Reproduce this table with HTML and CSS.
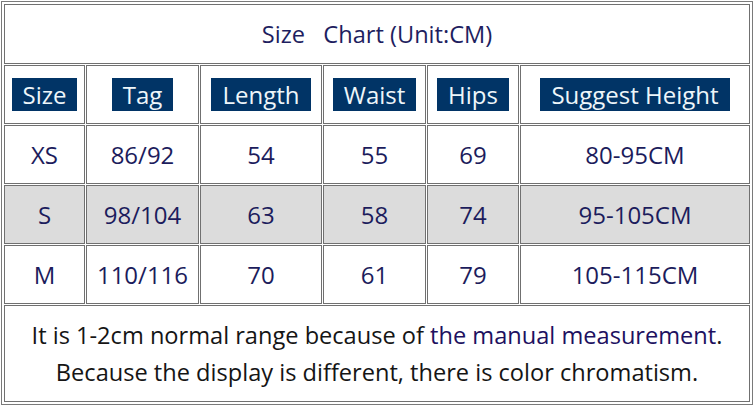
FILE: index.html
```html
<!DOCTYPE html>
<html>
<head>
<meta charset="utf-8">
<link rel="stylesheet" href="styles.css">
</head>
<body>
<table class="chart">
  <colgroup>
    <col class="c1"><col class="c2"><col class="c3"><col class="c4"><col class="c5"><col class="c6">
  </colgroup>
  <tr class="title-row"><td colspan="6" class="title">Size&nbsp;&nbsp; Chart (Unit:CM)</td></tr>
  <tr class="head-row">
    <td><span class="badge">Size</span></td>
    <td><span class="badge">Tag</span></td>
    <td><span class="badge">Length</span></td>
    <td><span class="badge">Waist</span></td>
    <td><span class="badge">Hips</span></td>
    <td><span class="badge">Suggest Height</span></td>
  </tr>
  <tr class="data-row">
    <td>XS</td><td>86/92</td><td>54</td><td>55</td><td>69</td><td>80-95CM</td>
  </tr>
  <tr class="data-row shaded">
    <td>S</td><td>98/104</td><td>63</td><td>58</td><td>74</td><td>95-105CM</td>
  </tr>
  <tr class="data-row">
    <td>M</td><td>110/116</td><td>70</td><td>61</td><td>79</td><td>105-115CM</td>
  </tr>
  <tr class="foot-row">
    <td colspan="6" class="note">
      <p class="line">It is 1-2cm normal range because of <span class="hl">the manual measurement</span>.</p>
      <p class="line">Because the display is different, there is color chromatism.</p>
    </td>
  </tr>
</table>
</body>
</html>
```
FILE: styles.css
```css
html, body {
  margin: 0;
  background: #ffffff;
}
body {
  padding: 1px;
  font-family: "Open Sans", "Noto Sans", sans-serif;
}
.chart {
  table-layout: fixed;
  border-collapse: separate;
  border-spacing: 1px;
  padding: 1px;
  border: 1px solid #7a7a7a;
  width: 752px;
}
.c1 { width: 81px; }
.c2 { width: 113px; }
.c3 { width: 122px; }
.c4 { width: 103px; }
.c5 { width: 92px; }
.c6 { width: 230px; }
.chart td {
  box-sizing: border-box;
  border: 1px solid #707070;
  padding: 0;
  text-align: center;
  vertical-align: middle;
  font-size: 24px;
  color: #1c1c5c;
}
.title-row td { height: 60px; }
.head-row td, .data-row td { height: 59px; }
.shaded td { background: #dcdcdc; }
.chart td.title {
  color: #1e1e60;
  font-size: 23.6px;
}
.badge {
  display: inline-block;
  background: #013466;
  color: #eef6fa;
  padding: 0 11px;
  line-height: 33px;
}
.foot-row td { height: 97px; }
.chart td.note {
  color: #151515;
  font-size: 23.6px;
  padding-top: 1px;
}
.line {
  margin: 0;
  line-height: 37px;
}
.hl {
  color: #201060;
}
```
